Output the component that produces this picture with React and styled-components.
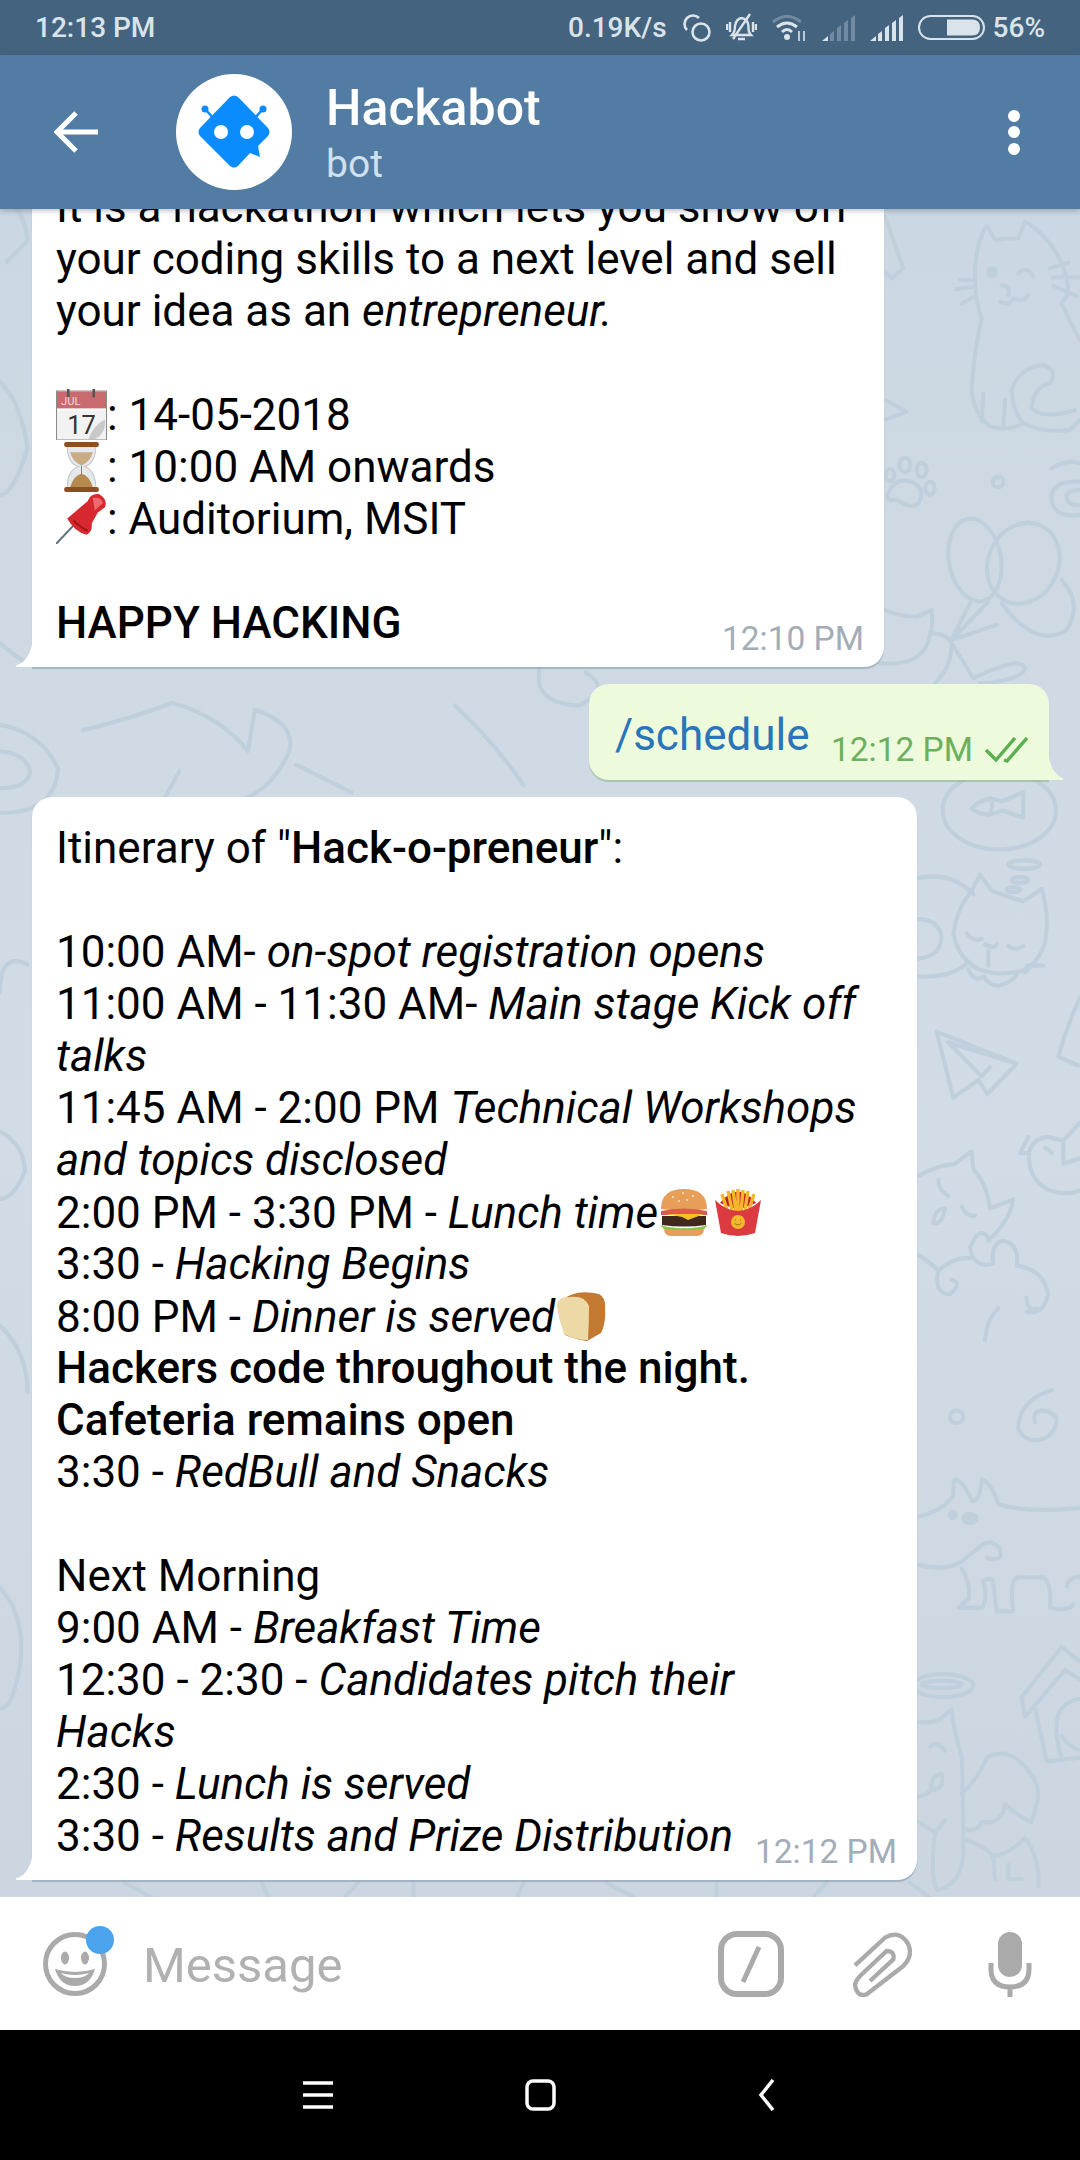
import React from 'react';
import styled, { createGlobalStyle } from 'styled-components';

const GlobalStyle = createGlobalStyle`
  html, body { margin: 0; padding: 0; background: #000; }
  body { font-family: Roboto, "Noto Sans", sans-serif; }
`;

const Phone = styled.div`
  width: 1080px;
  height: 2160px;
  display: flex;
  flex-direction: column;
  overflow: hidden;
`;

const StatusBar = styled.div`
  height: 55px;
  flex: none;
  display: flex;
  align-items: center;
  justify-content: space-between;
  padding: 0 35px;
  background: #44637f;
  color: #dbe3ea;
  font-size: 28px;
  font-weight: 500;
`;

const StatusIcons = styled.div`
  display: flex;
  align-items: center;
  gap: 15px;
`;

const Percent = styled.span`
  margin-left: -7px;
`;

const Header = styled.header`
  position: relative;
  z-index: 2;
  height: 154px;
  flex: none;
  display: flex;
  align-items: center;
  padding: 0 54px;
  background: #527ca3;
  box-shadow: 0 2px 5px rgba(40, 60, 80, 0.3);
`;

const Avatar = styled.div`
  width: 116px;
  height: 116px;
  flex: none;
  margin-left: 78px;
  border-radius: 50%;
  background: #fff;
  display: flex;
  align-items: center;
  justify-content: center;
`;

const Title = styled.div`
  flex: 1;
  margin-left: 34px;
  margin-top: 4px;
`;

const Name = styled.div`
  color: #fff;
  font-size: 50px;
  font-weight: 500;
  line-height: 60px;
`;

const Sub = styled.div`
  color: #cfe0ee;
  font-size: 39px;
  line-height: 52px;
`;

const Dots = styled.div`
  display: flex;
  flex-direction: column;
  gap: 4.5px;
  margin-right: 6px;
`;

const Dot = styled.span`
  width: 12px;
  height: 12px;
  border-radius: 50%;
  background: #fff;
`;

const Chat = styled.main`
  position: relative;
  flex: 1;
  min-height: 0;
  display: flex;
  flex-direction: column;
  justify-content: flex-end;
  align-items: flex-start;
  gap: 17px;
  padding: 0 31px 17px 32px;
  overflow: hidden;
  background: linear-gradient(180deg, #cbd7e2 0%, #d2dce6 55%, #cbd6e1 100%);
`;

const Wallpaper = styled.svg`
  position: absolute;
  left: 0;
  top: 0;
  fill: none;
  stroke: #c0cfdc;
  stroke-width: 12;
  stroke-linecap: round;
  stroke-linejoin: round;
`;

const Bubble = styled.div`
  position: relative;
  flex: none;
  box-sizing: border-box;
  width: ${(p) => p.$width}px;
  padding: 25px 18px 18px 24px;
  background: #fff;
  border-radius: 20px 20px 20px 0;
  box-shadow: 0 2px 1px rgba(110, 135, 160, 0.45);
  color: #000;
  font-size: 44px;
  line-height: 52px;
`;

const OutBubble = styled.div`
  position: relative;
  flex: none;
  align-self: flex-end;
  box-sizing: border-box;
  width: 460px;
  height: 96px;
  padding: 25px 0 0 26px;
  background: #edfbdc;
  border-radius: 20px 20px 0 20px;
  box-shadow: 0 2px 1px rgba(120, 170, 110, 0.45);
  color: #2a74b8;
  font-size: 44px;
  line-height: 52px;
`;

const Tail = styled.svg`
  position: absolute;
  bottom: 0;
  ${(p) => (p.$side === 'left' ? 'left: -17px;' : 'right: -15px;')}
`;

const Line = styled.div`
  height: 52px;
  white-space: nowrap;
`;

const Bold = styled.b`
  font-weight: 500;
`;

const Emoji = styled.svg`
  display: inline-block;
  width: ${(p) => p.$size || 51}px;
  height: ${(p) => p.$size || 51}px;
  vertical-align: -10px;
  margin-right: ${(p) => p.$after || 0}px;
`;

const Time = styled.span`
  position: absolute;
  right: ${(p) => p.$right}px;
  bottom: ${(p) => p.$bottom}px;
  display: flex;
  align-items: center;
  gap: 12px;
  color: ${(p) => p.$color};
  font-size: 33.5px;
  line-height: 38px;
  white-space: nowrap;
`;

const Composer = styled.footer`
  height: 133px;
  flex: none;
  display: flex;
  align-items: center;
  background: #fff;
  padding: 0 48px 0 43px;
`;

const Smile = styled.div`
  position: relative;
  width: 65px;
  height: 65px;
  flex: none;
`;

const Badge = styled.span`
  position: absolute;
  right: -6px;
  top: -5px;
  width: 28px;
  height: 28px;
  border-radius: 50%;
  background: #4aa3ec;
`;

const Placeholder = styled.div`
  flex: 1;
  margin: 3px 0 0 35px;
  color: #b1b1b1;
  font-size: 49px;
`;

const ToolIcon = styled.svg`
  flex: none;
  display: block;
  fill: none;
  stroke: #aaa;
  stroke-width: 5px;
  margin-left: ${(p) => p.$gap}px;
`;

const NavBar = styled.nav`
  height: 130px;
  flex: none;
  display: flex;
  align-items: center;
  justify-content: center;
  background: #000;
`;

const NavSlot = styled.div`
  width: 222px;
  display: flex;
  justify-content: center;
`;

const NavIcon = styled.svg`
  display: block;
  fill: none;
  stroke: #fff;
  stroke-width: 3.5px;
`;

function Doodles() {
  return (
    <Wallpaper width="1080" height="1688" viewBox="0 209 1080 1688">
      <g transform="translate(880 200) scale(.3333)">
        <path d="M305 355Q285 300 285 240Q280 150 320 75L345 120Q380 115 415 115L435 65Q500 100 540 180Q565 230 565 280L545 310Q570 370 600 420" />
        <path d="M305 355Q280 470 275 570Q280 640 330 680Q380 695 430 670Q400 640 395 570Q420 500 490 495Q535 510 510 550Q460 560 455 625Q490 660 585 630M430 670Q490 700 570 690L600 660M310 580L305 665M375 600L370 680" />
        <path d="M240 240H275M228 268L275 262M245 312L278 292M510 205L565 188M518 232H598M520 258L590 288M415 220Q440 195 460 230M365 255Q395 260 385 285M360 305Q385 320 400 295Q430 310 445 285" />
        <circle cx="336" cy="217" r="12" fill="#c0cfdc" />
        <ellipse cx="75" cy="795" rx="16" ry="22" />
        <ellipse cx="125" cy="810" rx="15" ry="22" />
        <ellipse cx="150" cy="865" rx="14" ry="20" />
        <ellipse cx="30" cy="825" rx="13" ry="18" />
        <path d="M25 880Q45 830 95 845Q135 865 120 900Q110 925 80 915Q50 895 30 900Q15 895 25 880Z" />
        <circle cx="354" cy="846" r="16" />
        <path d="M515 805Q565 775 600 790M600 945Q510 955 515 885Q525 840 600 845M600 915Q560 915 560 890Q560 870 600 870" />
        <ellipse cx="285" cy="1080" rx="78" ry="125" transform="rotate(-10 285 1080)" />
        <ellipse cx="430" cy="1090" rx="105" ry="125" transform="rotate(25 430 1090)" />
        <path d="M365 1210Q470 1350 560 1290Q610 1210 545 1140" />
        <path d="M270 1210L215 1320L325 1205M215 1320L350 1275" />
        <path d="M0 1225Q60 1250 110 1250L155 1230Q160 1280 150 1305Q140 1365 80 1385Q40 1395 0 1390" />
        <path d="M150 1300Q200 1300 215 1330L280 1435Q360 1395 410 1390Q460 1400 410 1430Q350 1450 300 1450M215 1330Q215 1400 165 1450" />
        <path d="M15 50L70 205L35 235L15 215M15 600L80 635L15 660" />
      </g>
      <g transform="translate(910 780) scale(.3333 .357)">
        <ellipse cx="268" cy="85" rx="170" ry="110" />
        <path d="M185 80Q225 40 275 60L340 35V105L275 85Q225 110 185 80ZM240 50Q255 80 235 100" />
        <ellipse cx="343" cy="237" rx="48" ry="12" />
        <ellipse cx="330" cy="280" rx="25" ry="8" />
        <ellipse cx="310" cy="307" rx="20" ry="7" />
        <path d="M130 430Q140 360 185 310L210 265L245 310Q305 330 340 340L395 305Q420 385 405 455Q385 515 335 535Q265 550 205 530Q145 500 130 430Z" />
        <path d="M25 275Q125 255 190 320M25 390Q85 390 95 440Q90 495 25 500M25 550Q125 555 175 510M175 530Q195 570 220 550Q240 580 270 575Q310 565 320 545M170 430Q190 455 215 445M295 465Q315 480 340 465M225 460Q255 475 260 460M235 480V520M350 520L400 520M345 540L365 520" />
        <path d="M80 705L320 795L232 880L205 840L130 890ZM115 735L320 795M115 735L215 830L240 805" />
        <path d="M510 610Q470 690 445 775L505 800" />
        <path d="M358 1040Q375 1000 415 1000L460 1010L510 960M460 1010V1075L510 1060M358 1040Q350 1120 420 1150Q470 1165 510 1150M355 1045H330L355 1000M405 1030Q420 1035 425 1045" />
        <path d="M25 1110Q75 1080 135 1075L185 1040L190 1090Q230 1130 240 1200L310 1175Q300 1235 235 1290M155 1195Q170 1225 195 1220M85 1120Q85 1150 115 1165M70 1240Q75 1200 105 1200Q95 1250 70 1240M240 1290Q210 1240 180 1310Q190 1370 250 1355Q240 1300 280 1290Q330 1300 320 1360Q400 1370 415 1440Q400 1500 350 1490M350 1450Q350 1490 380 1480M25 1330Q60 1350 85 1375Q130 1335 180 1340M85 1375Q70 1440 120 1440Q160 1410 125 1400M265 1480Q230 1510 225 1568" />
      </g>
      <g transform="translate(910 1340) scale(.3333 .357)">
        <ellipse cx="140" cy="215" rx="20" ry="18" />
        <path d="M425 140Q325 170 325 250Q355 300 415 270Q465 220 415 200Q365 190 375 230" />
        <path d="M25 495Q105 475 130 435Q130 395 135 390Q165 400 185 450Q210 455 215 390Q245 400 265 460Q345 485 510 470" />
        <ellipse cx="180" cy="500" rx="20" ry="13" fill="#c0cfdc" />
        <circle cx="128" cy="490" r="9" fill="#c0cfdc" />
        <path d="M25 630Q105 650 155 620L215 575Q245 555 270 585Q280 625 230 610M155 640Q185 690 175 725L145 750H215Q235 730 220 675Q250 660 250 685L260 760H310Q295 660 330 665H400Q425 675 420 750Q480 760 490 740M470 690Q480 660 510 665" />
        <path d="M345 1055L335 1000L455 860L510 900M345 1055L465 925L510 950M375 1030L410 1180L510 1170M455 1170Q405 1020 510 1005M455 1110Q480 1140 510 1150" />
        <ellipse cx="100" cy="968" rx="90" ry="32" />
        <ellipse cx="95" cy="965" rx="60" ry="10" />
        <path d="M25 1070Q85 1075 100 1055L125 1035Q130 1095 155 1165Q160 1295 160 1445Q150 1530 80 1540Q60 1500 75 1380L25 1350M60 1140Q80 1120 105 1150M65 1260Q60 1220 95 1215Q105 1260 65 1260Q50 1275 25 1280M75 1380L105 1345M155 1270Q205 1230 230 1170Q290 1140 340 1190Q385 1230 385 1280L365 1350Q315 1330 285 1300Q275 1360 215 1350Q200 1380 165 1370M165 1400Q230 1420 250 1450L255 1510M250 1445Q300 1440 345 1395Q390 1450 385 1530M295 1470V1510H335" />
      </g>
      <g transform="scale(1.378)">
        <path d="M-5 525Q30 530 42 558Q40 590 0 590M-5 545Q18 545 22 560Q20 572 0 572" strokeWidth="3" />
        <path d="M60 530Q100 520 125 510Q160 520 180 545L185 515Q215 525 210 545Q195 580 160 585" strokeWidth="3" />
        <path d="M395 475Q380 510 420 512Q445 500 425 488M330 512Q360 540 380 570M215 555L255 575" strokeWidth="3" />
        <path d="M460 510L500 540M120 578L130 560" strokeWidth="3" />
        <path d="M-2 140Q18 150 20 175L5 190M-2 275Q15 290 20 325Q10 360 -2 360M-2 465Q15 480 20 480" strokeWidth="3" />
        <path d="M20 700Q0 690 0 720M-2 820Q18 830 18 850Q10 870 0 870M-2 960Q20 980 20 1010M-2 1150Q18 1170 15 1205Q10 1240 0 1240" strokeWidth="3" />
        <path d="M90 1366L110 1377M190 1366L195 1377M260 1366L250 1377M300 1366V1377M380 1366L375 1377M440 1366L460 1377M520 1366V1377M600 1366L590 1377M660 1366L675 1377" strokeWidth="3" />
      </g>
    </Wallpaper>
  );
}

const CalendarEmoji = () => (
  <Emoji viewBox="0 0 50 50">
    <rect x="0.5" y="2" width="49" height="48" fill="#f2f2f2" stroke="#8a8a8a" />
    <rect x="1" y="2.5" width="48" height="18" fill="#c96a6f" />
    <rect x="1" y="19" width="48" height="2" fill="#fff" />
    <path d="M12 0V8M37 0V8" stroke="#555" strokeWidth="2.5" />
    <text x="5" y="16" fontSize="11" fontFamily="Roboto" fill="#f3d9da">JUL</text>
    <text x="11" y="44" fontSize="25" fontFamily="Roboto" fill="#333">17</text>
    <path d="M32 49Q36 36 48 30V36Q46 46 38 49Z" fill="#c9c9c9" />
  </Emoji>
);

const HourglassEmoji = () => (
  <Emoji viewBox="0 0 50 50">
    <path d="M11 5Q11 22 22 25Q11 29 11 46H39Q39 29 28 25Q39 22 39 5Z" fill="#e6e9ec" stroke="#c2c6c9" />
    <path d="M14 11H36Q34 20 25 24Q16 20 14 11Z" fill="#c9ab85" />
    <path d="M14 45Q17 34 25 32Q33 34 36 45Z" fill="#b48a4e" />
    <path d="M24.5 24H25.5V34H24.5Z" fill="#a77f4a" />
    <rect x="8" y="1" width="34" height="5" rx="2" fill="#8c4f22" />
    <rect x="8" y="45" width="34" height="5" rx="2" fill="#8c4f22" />
  </Emoji>
);

const PinEmoji = () => (
  <Emoji viewBox="0 0 50 50">
    <path d="M0 50L17 32" stroke="#5f7282" strokeWidth="2" />
    <path d="M11 25L24 14L31 8Q34 0 42 1Q51 6 48 14L41 19L35 30Q36 38 30 41Q18 38 11 25Z" fill="#d7282f" />
    <path d="M36 5Q44 3 46 10L38 17Z" fill="#ee6a6e" />
    <path d="M17 27Q24 34 31 37" stroke="#a0161c" strokeWidth="2" fill="none" />
  </Emoji>
);

const BurgerEmoji = () => (
  <Emoji $size={52} $after={2} viewBox="0 0 52 52">
    <path d="M3 23Q3 3 26 3Q49 3 49 23Q26 26 3 23Z" fill="#e79e58" />
    <path d="M14 11h2M24 7h2M34 10h2M28 14h2M20 15h2" stroke="#f6e7c8" strokeWidth="1.5" />
    <path d="M3 25Q26 20 49 25V29H3Z" fill="#df5a4e" />
    <path d="M4 30H48V39Q26 42 4 39Z" fill="#40281c" />
    <path d="M8 28H46L30 34L24 31Z" fill="#f6bf26" />
    <path d="M2 39Q14 43 26 42Q38 43 50 39L44 45H8Z" fill="#8ac64a" />
    <path d="M6 44H46Q45 50 38 50H14Q7 50 6 44Z" fill="#e79e58" />
  </Emoji>
);

const FriesEmoji = () => (
  <Emoji $size={52} viewBox="0 0 52 52">
    <path d="M8 17Q26 -6 44 17L26 24Z" fill="#c01f27" />
    <path d="M10 8L15 24M16 5L20 24M21 4L24 26M26 3V26M31 4L29 26M36 5L33 24M42 8L37 24" stroke="#f4b62a" strokeWidth="3.4" />
    <path d="M3 14Q26 36 49 14L43 47Q26 53 9 47Z" fill="#dc3a41" />
    <circle cx="26" cy="36" r="7" fill="#f1b92d" />
    <path d="M22.5 37Q26 41 29.5 37M23 34h1M28 34h1" stroke="#a86b12" strokeWidth="1" fill="none" />
  </Emoji>
);

const BreadEmoji = () => (
  <Emoji $size={52} viewBox="0 0 52 52">
    <path d="M4 12Q20 -2 44 4Q51 8 50 18Q51 34 46 43L32 51Q22 50 10 45Q6 30 4 12Z" fill="#c27a33" />
    <path d="M2 17Q2 6 14 7Q30 5 34 16Q34 32 33 50Q20 50 9 44Q4 30 2 17Z" fill="#edd9a6" />
  </Emoji>
);

export default function App() {
  return (
    <Phone>
      <GlobalStyle />
      <StatusBar>
        <span>12:13 PM</span>
        <StatusIcons>
          <span>0.19K/s</span>
          <svg width="29" height="30" viewBox="0 0 29 30" fill="none" stroke="#dbe3ea" strokeWidth="2.6">
            <circle cx="19" cy="19" r="8.5" />
            <path d="M5 17A8 8 0 1 1 17 5" />
          </svg>
          <svg width="31" height="30" viewBox="0 0 31 30" fill="none" stroke="#dbe3ea" strokeWidth="2.4">
            <path d="M6 22Q9 19 9 13Q10 6 15.5 5Q22 6 22.5 13Q22 19 25 22Z" />
            <path d="M12 26H19M1 11V17M4 9V19M30 11V17M27 9V19M7 26L24 1" />
          </svg>
          <svg width="35" height="28" viewBox="0 0 35 28" fill="none" stroke="#dbe3ea" strokeWidth="3">
            <path d="M1 8Q15 -3 29 8" opacity=".3" />
            <path d="M5 13Q15 5 25 13M10 18Q15 13 20 18" />
            <circle cx="15" cy="23" r="3" fill="#dbe3ea" stroke="none" />
            <path d="M27 17V27M32 17V27" strokeWidth="1.6" />
          </svg>
          <svg width="33" height="26" viewBox="0 0 33 26" fill="#dbe3ea">
            <path d="M0 26L6 21V26Z" />
            <path d="M8 19L12 16V26H8ZM15 13L19 10V26H15ZM22 8L26 5V26H22ZM29 3L33 0V26H29Z" opacity=".3" />
          </svg>
          <svg width="33" height="26" viewBox="0 0 33 26" fill="#dbe3ea">
            <path d="M0 26L6 21V26ZM8 19L12 16V26H8ZM15 13L19 10V26H15ZM22 8L26 5V26H22ZM29 3L33 0V26H29Z" />
          </svg>
          <svg width="67" height="25" viewBox="0 0 67 25" fill="none">
            <rect x="1" y="1" width="65" height="23" rx="11.5" stroke="#dbe3ea" strokeWidth="2" />
            <path d="M29 4.500H54Q62 4.500 62 12.500Q62 20.500 54 20.500H29Z" fill="#dbe3ea" />
          </svg>
          <Percent>56%</Percent>
        </StatusIcons>
      </StatusBar>

      <Header>
        <svg width="44" height="42" viewBox="0 0 44 42" fill="none" stroke="#fff" strokeWidth="5">
          <path d="M44 21H4M22 2L3 21L22 40" />
        </svg>
        <Avatar>
          <svg width="76" height="76" viewBox="0 0 76 76">
            <path d="M10 16L18 25M66 16L58 25" stroke="#0a8cff" strokeWidth="2.500" />
            <circle cx="9" cy="15" r="3.500" fill="#0a8cff" />
            <circle cx="67" cy="15" r="3.500" fill="#0a8cff" />
            <path d="M34 3Q38 0 42 3L72 34Q75 38 72 42L62 52L64 63L54 59L42 72Q38 75 34 72L4 42Q1 38 4 34Z" fill="#0a8cff" />
            <circle cx="25" cy="38" r="7" fill="#fff" />
            <circle cx="51" cy="38" r="7" fill="#fff" />
          </svg>
        </Avatar>
        <Title>
          <Name>Hackabot</Name>
          <Sub>bot</Sub>
        </Title>
        <Dots>
          <Dot />
          <Dot />
          <Dot />
        </Dots>
      </Header>

      <Chat>
        <Doodles />
        <Bubble $width={852}>
          <Line>It is a hackathon which lets you show off</Line>
          <Line>your coding skills to a next level and sell</Line>
          <Line>your idea as an <i>entrepreneur.</i></Line>
          <Line />
          <Line><CalendarEmoji />: 14-05-2018</Line>
          <Line><HourglassEmoji />: 10:00 AM onwards</Line>
          <Line><PinEmoji />: Auditorium, MSIT</Line>
          <Line />
          <Line><Bold>HAPPY HACKING</Bold></Line>
          <Time $right={20} $bottom={9} $color="#a3adb8">12:10 PM</Time>
          <Tail $side="left" width="18" height="28" viewBox="0 0 18 28">
            <path d="M18 0V28H1Q0 27 2 26Q15 22 18 0Z" fill="#fff" />
          </Tail>
        </Bubble>

        <OutBubble>
          /schedule
          <Time $right={21} $bottom={11} $color="#6cb05c">
            12:12 PM
            <svg width="43" height="26" viewBox="0 0 43 26" fill="none" stroke="#5caf50" strokeWidth="3.400">
              <path d="M1 13L11 23L30 1M19 23L22 24L42 1" />
            </svg>
          </Time>
          <Tail $side="right" width="16" height="32" viewBox="0 0 16 32">
            <path d="M0 0Q1 25 15 30Q16 32 14 32H0Z" fill="#edfbdc" />
          </Tail>
        </OutBubble>

        <Bubble $width={885}>
          <Line>Itinerary of "<Bold>Hack-o-preneur</Bold>":</Line>
          <Line />
          <Line>10:00 AM- <i>on-spot registration opens</i></Line>
          <Line>11:00 AM - 11:30 AM- <i>Main stage Kick off</i></Line>
          <Line><i>talks</i></Line>
          <Line>11:45 AM - 2:00 PM <i>Technical Workshops</i></Line>
          <Line><i>and topics disclosed</i></Line>
          <Line>2:00 PM - 3:30 PM - <i>Lunch time</i><BurgerEmoji /><FriesEmoji /></Line>
          <Line>3:30 - <i>Hacking Begins</i></Line>
          <Line>8:00 PM - <i>Dinner is served</i><BreadEmoji /></Line>
          <Line><Bold>Hackers code throughout the night.</Bold></Line>
          <Line><Bold>Cafeteria remains open</Bold></Line>
          <Line>3:30 - <i>RedBull and Snacks</i></Line>
          <Line />
          <Line>Next Morning</Line>
          <Line>9:00 AM - <i>Breakfast Time</i></Line>
          <Line>12:30 - 2:30 - <i>Candidates pitch their</i></Line>
          <Line><i>Hacks</i></Line>
          <Line>2:30 - <i>Lunch is served</i></Line>
          <Line>3:30 - <i>Results and Prize Distribution</i></Line>
          <Time $right={20} $bottom={9} $color="#a3adb8">12:12 PM</Time>
          <Tail $side="left" width="18" height="28" viewBox="0 0 18 28">
            <path d="M18 0V28H1Q0 27 2 26Q15 22 18 0Z" fill="#fff" />
          </Tail>
        </Bubble>
      </Chat>

      <Composer>
        <Smile>
          <svg width="65" height="65" viewBox="0 0 65 65" fill="none">
            <circle cx="32" cy="33" r="29.500" stroke="#aaa" strokeWidth="5" />
            <ellipse cx="22" cy="27" rx="4" ry="6.500" fill="#aaa" />
            <ellipse cx="42" cy="27" rx="4" ry="6.500" fill="#aaa" />
            <path d="M12 38Q32 44 52 38Q47 55 32 55Q17 55 12 38Z" fill="#aaa" />
            <path d="M18 42Q32 46 46 42Q42 47 32 47Q22 47 18 42Z" fill="#fff" />
          </svg>
          <Badge />
        </Smile>
        <Placeholder>Message</Placeholder>
        <ToolIcon width="66" height="66" viewBox="0 0 66 66">
          <rect x="3" y="3" width="60" height="60" rx="16" strokeWidth="6" />
          <path d="M41 16L25 51" />
        </ToolIcon>
        <ToolIcon $gap={69} width="62" height="66" viewBox="0 0 62 66">
          <g transform="translate(-153 0) scale(.3333)" strokeWidth="13">
            <path d="M465 103L555 20Q600 -5 625 40Q640 75 610 105L500 190Q470 200 465 160Q470 145 480 135L560 60Q585 60 580 85L510 150" />
          </g>
        </ToolIcon>
        <ToolIcon $gap={73} width="44" height="66" viewBox="0 0 44 66">
          <rect x="10" y="1" width="24" height="45" rx="12" fill="#aaa" stroke="none" />
          <path d="M3 32V38Q3 56 22 56Q41 56 41 38V32M22 56V66" />
        </ToolIcon>
      </Composer>

      <NavBar>
        <NavSlot>
          <NavIcon width="30" height="28" viewBox="0 0 30 28">
            <path d="M0 2H30M0 14H30M0 26H30" />
          </NavIcon>
        </NavSlot>
        <NavSlot>
          <NavIcon width="31" height="32" viewBox="0 0 31 32">
            <rect x="2" y="2" width="27" height="28" rx="6" />
          </NavIcon>
        </NavSlot>
        <NavSlot>
          <NavIcon width="30" height="32" viewBox="0 0 30 32">
            <path d="M26 1L14 16L26 31" />
          </NavIcon>
        </NavSlot>
      </NavBar>
    </Phone>
  );
}
